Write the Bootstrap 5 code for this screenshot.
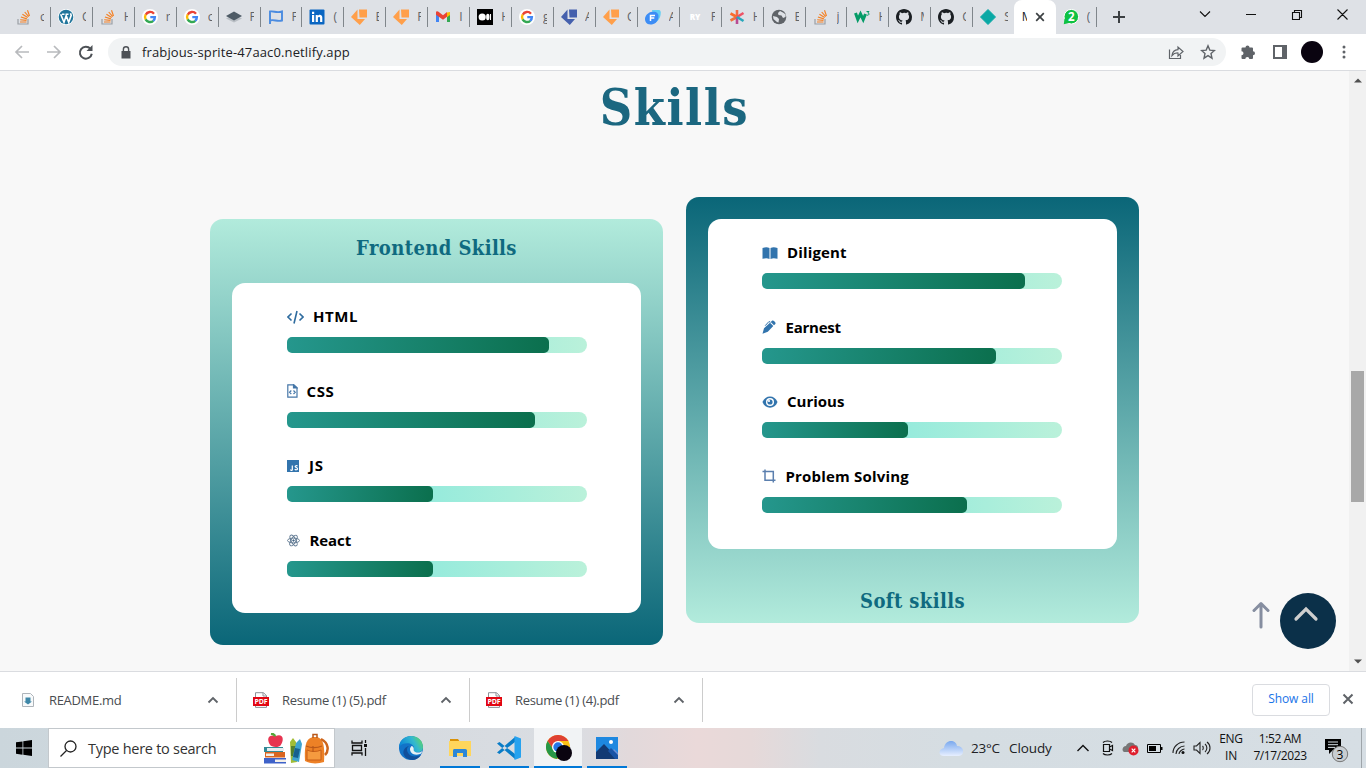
<!DOCTYPE html>
<html lang="en">
<head>
<meta charset="utf-8">
<title>Skills</title>
<link rel="stylesheet" href="https://cdn.jsdelivr.net/npm/bootstrap@5.3.0/dist/css/bootstrap.min.css">
<style>
body{width:1366px;height:768px;overflow:hidden;font-family:"Open Sans","Noto Sans",sans-serif;font-size:12px;line-height:1.2;color:#202124;background:#fff}
svg{display:block;flex:none}
.tabstrip{height:34px;background:#dee1e6;padding-left:9px}
.tab{width:41.93px;height:34px;padding-left:7px;flex:none;background:linear-gradient(#80868b,#80868b) right 7px/1px 20px no-repeat}
.tab.plain{background:none;width:40.6px}
.tab .ltr{width:4px;margin-left:8px;overflow:hidden;color:#5f6368;font-size:12px}
.tab-on{width:42px;height:34px;background:#fff;border-radius:8px 8px 0 0;flex:none;padding-left:8px}
.tab-on .ltr{width:5px;overflow:hidden;margin-right:8px}
.toolbar{height:37px;border-bottom:1px solid #dadce0}
.omni{width:1118px;height:28px;border-radius:14px;background:#f1f3f4;padding:0 10px 0 12px;font-size:13px}
.omni .url{margin:1px 0 0 11px;letter-spacing:.13px}
.pageview{height:600px;background:#f8f8f8}
.bar-v{width:17px;background:#f1f1f1;padding:7px 0}
.thumb{width:13px;height:131px;background:#a8a8a8;margin-top:288px}
.slab{font-family:"DejaVu Serif Condensed","DejaVu Serif",serif;font-stretch:condensed;font-weight:700;color:#0f6a80}
.ttl{font-size:50px;line-height:60px;margin:7px 0 0;letter-spacing:1.5px;color:#1b6780}
.cards{gap:23px;height:448px;margin-top:59px}
.skill-card{width:453px;height:426px;border-radius:13px;padding:0 22px}
.skill-card h2{font-size:20px;margin:0;line-height:24px;letter-spacing:.4px}
.front{background:linear-gradient(#b2ebdc,#0a6678);margin-top:22px}
.soft{background:linear-gradient(#0a6678,#b2ebdc);padding-top:22px}
.inner{height:330px;background:#fff;border-radius:13px;padding:23px 54px 0 55px}
.inner.r{padding-left:54px}
.skill{height:74.67px}
.skill .nm{height:21px;font-weight:700;font-size:15px;color:#000;margin-bottom:10px}
.skill .nm span{margin-top:-1px}
.track{width:300px;height:16px;border-radius:8px;background:linear-gradient(90deg,#76e5df,#98ebdc 50%,#baf1da)}
.fill{height:16px;border-radius:5px;background:linear-gradient(95deg,#25978d,#0b6f4d)}
.totop{position:absolute;left:1280px;top:522px;width:56px;height:56px;border-radius:50%;background:#0b3049}
.uparrow{position:absolute;left:1252px;top:530px}
.dl{height:57px;border-top:1px solid #dadce0}
.dl .item{height:44px;border-right:1px solid #ccc;font-size:13px;color:#4a4d51;width:233px;padding-left:16px}
.dl .item span{margin-top:1px;letter-spacing:-.32px}
.showall{width:78px;height:32px;border:1px solid #dadce0;border-radius:4px;color:#1a73e8;font-size:12px;margin-bottom:1px;letter-spacing:-.1px}
.task{height:40px;background:linear-gradient(90deg,#cbd6dc,#d4dadf 25%,#dadde2 42%,#e2d9db 46%,#ead9d9 51%,#e6d9d9 55%,#d9dce0 60%,#d5dde2 70%,#d6dee4)}
.search{width:287px;height:40px;border:1px solid #c3c8cc;background:#fff;font-size:14.5px;padding:0 5px 0 11px;color:#333}
.app{height:40px;border-bottom:2px solid #0078d7;flex:none;padding-top:2px}
.tray{font-size:12px;color:#111;text-align:center;line-height:17px}
</style>
</head>
<body class="d-flex flex-column">
<svg width="0" height="0" class="position-absolute">
<defs>
<symbol id="so" viewBox="0 0 16 16"><path d="M2 10v5h10v-5" fill="none" stroke="#9a9fa5" stroke-width="1.2"/><path d="M4 13h6.500M4.200 10.700l6.300.7M4.900 8l6 1.900M6.400 5.300l5.300 3.300M8.700 3l4 4.700M11.500 1.300l2 5.700" stroke="#f48024" stroke-width="1.150"/></symbol>
<symbol id="wp" viewBox="0 0 16 16"><circle cx="8" cy="8" r="8" fill="#fff"/><circle cx="8" cy="8" r="7.300" fill="#21759b"/><path d="M2.700 5.200l3.300 8 2.200-6.500 2.500 6.500 2.500-6.800-.7-2.200M4 5.200h2.500M7.500 5.200h3" fill="none" stroke="#fff" stroke-width="1.600"/></symbol>
<symbol id="gg" viewBox="0 0 16 16"><circle cx="8" cy="8" r="8" fill="#fff"/><g fill="none" stroke-width="2.400"><path d="M12 4.700A5 5 0 0 0 3.700 5.700" stroke="#ea4335"/><path d="M3.700 5.500a5 5 0 0 0 0 5" stroke="#fbbc05"/><path d="M3.600 10.400a5 5 0 0 0 7.700 1.400" stroke="#34a853"/><path d="M11.200 11.900A5 5 0 0 0 12.900 8.100H8.300" stroke="#4285f4"/></g></symbol>
<symbol id="layers" viewBox="0 0 16 16"><path d="M0 9.500l8-4 8 4-8 4z" fill="#b9bec4"/><path d="M0 7l8-4.500L16 7l-8 4.500z" fill="#4e5b66"/></symbol>
<symbol id="flag" viewBox="0 0 16 16"><path d="M2 15V2.500c4-1 6 2 12 0v9c-5 1.500-8-1.500-12 0" fill="none" stroke="#4a8be0" stroke-width="1.900"/></symbol>
<symbol id="li" viewBox="0 0 16 16"><rect x=".5" y=".5" width="15" height="15" rx="1" fill="#0a66c2"/><path d="M3 6h2.200v7H3zM3 2.800h2.200V5H3zM6.700 6h2.100v1c1-1.800 4.500-1.600 4.500 1.600V13h-2.200V9.300c0-2-2.200-1.700-2.200 0V13H6.700z" fill="#fff"/></symbol>
<symbol id="shard" viewBox="0 0 16 16"><path d="M6.500.5V10H14L8.800 16 0 8zM8 .5h8V8.500H8.500z"/></symbol>
<symbol id="gm" viewBox="0 0 16 16"><path d="M1 4v9h3V7z" fill="#4285f4"/><path d="M15 4v9h-3V7z" fill="#34a853"/><path d="M12 3.500l3-.5v3l-3 2.200z" fill="#fbbc04"/><path d="M1 3.500c0-1.500 1.600-1.600 2.500-.8L8 6.200l4-3.200v4.800l-4 3-7-5z" fill="#ea4335"/></symbol>
<symbol id="med" viewBox="0 0 16 16"><path d="M0 0h16v16H0z"/><circle cx="5.200" cy="8" r="3.600" fill="#fff"/><ellipse cx="10.800" cy="8" rx="1.700" ry="3.300" fill="#fff"/><path d="M13.500 5v6" stroke="#fff" stroke-width="1.100"/></symbol>
<symbol id="ff" viewBox="0 0 16 16"><path d="M7 1h6c3 0 3 2 2.500 5S13 13 9 14z" fill="#62cff4"/><path d="M6 3c5-1 8 1 7.500 5-.5 5-4 7.500-8 7.500C1 15.500 0 12 0 10c0-3 3-6.500 6-7z" fill="#3d8df5"/><path d="M5.500 12V6.500H10M6 9h3.300" stroke="#fff" stroke-width="1.500" fill="none"/></symbol>
<symbol id="ast" viewBox="0 0 16 16"><g stroke-width="2.600" fill="none"><path d="M8 8V1" stroke="#f36b45"/><path d="M8 8L1.500 4.500" stroke="#fa6b2c"/><path d="M8 8l6.500-4" stroke="#ee5366"/><path d="M8 8l-6.500 3.500" stroke="#ee743b"/><path d="M8 8v7" stroke="#b94b93"/><path d="M8 8l6.500 4" stroke="#28a7bb"/></g></symbol>
<symbol id="glb" viewBox="0 0 16 16"><circle cx="8" cy="8" r="7.300" fill="#5f6368"/><path d="M9 2l-2 2 .5 2 3 .5 1.500 2.500 2.500-1 .2-2.500L12 3.500zM2 7l4 1 2 2-.5 3.500L6 13 2.500 10z" fill="#dee1e6"/></symbol>
<symbol id="w3" viewBox="0 0 16 16"><path d="M1.500 4l2.300 6.500L6.500 5l2.700 5.500L11.500 5" fill="none" stroke="#049b67" stroke-width="3"/><path d="M12.500 2.500h2.500L13.800 4c1.800 0 1.800 2.500-1 2.200" fill="none" stroke="#049b67" stroke-width="1"/></symbol>
<symbol id="gh" viewBox="0 0 16 16"><path d="M8 0C3.580 0 0 3.580 0 8c0 3.540 2.290 6.530 5.470 7.590.4.070.55-.17.55-.38v-1.490c-2.230.49-2.690-.94-2.690-.94-.36-.92-.89-1.170-.89-1.170-.72-.5.060-.49.060-.49.800.06 1.220.82 1.220.82.720 1.220 1.880.87 2.330.66.070-.52.280-.87.510-1.070-1.780-.2-3.640-.89-3.640-3.950 0-.87.310-1.590.820-2.150-.08-.2-.36-1.010.080-2.120 0 0 .67-.21 2.200.82A7.700 7.700 0 0 1 8 3.860c.68 0 1.360.09 2 .27 1.530-1.040 2.200-.82 2.200-.82.440 1.110.160 1.920.080 2.120.51.560.820 1.280.820 2.150 0 3.070-1.870 3.750-3.650 3.950.29.25.540.73.540 1.480v2.200c0 .21.150.46.550.38A8 8 0 0 0 16 8c0-4.420-3.580-8-8-8z" fill="#1b1f23"/></symbol>
<symbol id="dia" viewBox="0 0 16 16"><path d="M8 .5L15.500 8 8 15.500.5 8z" fill="#0aa8a5" stroke="#0aa8a5" stroke-linejoin="round"/></symbol>
<symbol id="pdf" viewBox="0 0 16 16"><path d="M2.500 5V.7h8l3 3V5M10 .7V4h3.500M2.500 14v1.400h11V14" fill="none" stroke="#8d9298"/><path d="M0 5h16v9H0z" fill="#e20613"/><text x="8" y="12" text-anchor="middle" font-size="7" font-weight="700" fill="#fff" font-family="Open Sans,sans-serif" textLength="13">PDF</text></symbol>
<symbol id="up" viewBox="0 0 12 12"><path d="M1.500 8.500L6 4l4.500 4.500" fill="none" stroke="#5f6368" stroke-width="1.800"/></symbol>
</defs></svg>

<header class="tabstrip d-flex align-items-center">
<div class="tab d-flex align-items-center"><svg width="16" height="16"><use href="#so"/></svg><span class="ltr">c</span></div>
<div class="tab d-flex align-items-center"><svg width="16" height="16"><use href="#wp"/></svg><span class="ltr">C</span></div>
<div class="tab d-flex align-items-center"><svg width="16" height="16"><use href="#so"/></svg><span class="ltr">H</span></div>
<div class="tab d-flex align-items-center"><svg width="16" height="16"><use href="#gg"/></svg><span class="ltr">r</span></div>
<div class="tab d-flex align-items-center"><svg width="16" height="16"><use href="#gg"/></svg><span class="ltr">c</span></div>
<div class="tab d-flex align-items-center"><svg width="16" height="16"><use href="#layers"/></svg><span class="ltr">F</span></div>
<div class="tab d-flex align-items-center"><svg width="16" height="16"><use href="#flag"/></svg><span class="ltr">F</span></div>
<div class="tab d-flex align-items-center"><svg width="16" height="16"><use href="#li"/></svg><span class="ltr">(</span></div>
<div class="tab d-flex align-items-center"><svg width="16" height="16" fill="#ff9f4a"><use href="#shard"/></svg><span class="ltr">E</span></div>
<div class="tab d-flex align-items-center"><svg width="16" height="16" fill="#ff9f4a"><use href="#shard"/></svg><span class="ltr">F</span></div>
<div class="tab d-flex align-items-center"><svg width="16" height="16"><use href="#gm"/></svg><span class="ltr">I</span></div>
<div class="tab d-flex align-items-center"><svg width="16" height="16"><use href="#med"/></svg><span class="ltr">H</span></div>
<div class="tab d-flex align-items-center"><svg width="16" height="16"><use href="#gg"/></svg><span class="ltr">g</span></div>
<div class="tab d-flex align-items-center"><svg width="16" height="16" fill="#4560ad"><use href="#shard"/></svg><span class="ltr">A</span></div>
<div class="tab d-flex align-items-center"><svg width="16" height="16" fill="#ff9f4a"><use href="#shard"/></svg><span class="ltr">C</span></div>
<div class="tab d-flex align-items-center"><svg width="16" height="16"><use href="#ff"/></svg><span class="ltr">A</span></div>
<div class="tab d-flex align-items-center"><svg width="16" height="16" viewBox="0 0 16 16"><text x="8" y="11" text-anchor="middle" font-size="8" font-weight="800" fill="#fff">RY</text></svg><span class="ltr">F</span></div>
<div class="tab d-flex align-items-center"><svg width="16" height="16"><use href="#ast"/></svg><span class="ltr">H</span></div>
<div class="tab d-flex align-items-center"><svg width="16" height="16"><use href="#glb"/></svg><span class="ltr">E</span></div>
<div class="tab d-flex align-items-center"><svg width="16" height="16"><use href="#so"/></svg><span class="ltr">j</span></div>
<div class="tab d-flex align-items-center"><svg width="16" height="16"><use href="#w3"/></svg><span class="ltr">H</span></div>
<div class="tab d-flex align-items-center"><svg width="16" height="16"><use href="#gh"/></svg><span class="ltr">M</span></div>
<div class="tab d-flex align-items-center"><svg width="16" height="16"><use href="#gh"/></svg><span class="ltr">C</span></div>
<div class="tab plain d-flex align-items-center"><svg width="16" height="16"><use href="#dia"/></svg><span class="ltr">S</span></div>
<div class="tab-on d-flex align-items-center"><span class="ltr">M</span><svg width="10" height="10" viewBox="0 0 10 10"><path d="M1.200 1.200l7.600 7.600M8.800 1.200L1.200 8.800" stroke="#3c4043" stroke-width="1.700"/></svg></div>
<div class="tab d-flex align-items-center" style="width:41px"><svg width="16" height="16" viewBox="0 0 16 16"><circle cx="8.300" cy="7.700" r="7.300" fill="#0ec143" stroke="#fff"/><path d="M1.500 9.500L.8 15.200l6-1.500z" fill="#0ec143"/><text x="8.300" y="12" font-size="11.500" font-weight="700" fill="#fff" text-anchor="middle" font-family="Open Sans,sans-serif">2</text></svg><span class="ltr">(</span></div>
<svg width="12" height="12" viewBox="0 0 12 12" style="margin-left:16px"><path d="M6 0v12M0 6h12" stroke="#3c4043" stroke-width="2"/></svg>
<svg width="160" height="14" viewBox="0 0 160 14" style="margin:-6px 0 0 74px" fill="none" stroke="#111"><path d="M1 4.500L6 9.500l5-5M47 7.500h10M93.500 5.500h7v7h-7zM95.500 5.500v-2h7v7h-2M138.500 2.500l10 10M148.500 2.500l-10 10" stroke-width="1.100"/></svg>
</header>

<nav class="toolbar d-flex align-items-center">
<svg width="80" height="18" viewBox="0 0 80 18" style="margin-left:14px" fill="none"><path d="M15 9H2M8 3L2 9l6 6" stroke="#b8babd" stroke-width="1.700"/><path d="M33 9h13M40 3l6 6-6 6" stroke="#b8babd" stroke-width="1.700"/><path d="M76.500 5.800a6 6 0 1 0 1.300 5" stroke="#4d5156" stroke-width="2"/><path d="M78.500 2v6h-6z" fill="#4d5156"/></svg>
<div class="omni d-flex align-items-center" style="margin-left:14px"><svg width="10" height="13" viewBox="0 0 10 13" style="margin-left:1px"><path d="M.5 5h9v7.500h-9z" fill="#4d5156"/><path d="M2.400 5.500V3.300a2.600 2.600 0 0 1 5.200 0v2.200" fill="none" stroke="#4d5156" stroke-width="1.400"/></svg><span class="url">frabjous-sprite-47aac0.netlify.app</span>
<svg class="ms-auto" width="16" height="16" viewBox="0 0 16 16" fill="none" stroke="#5f6368"><path d="M1.500 5.500v9h11V11M4 11.500c.5-4 2.500-5.500 6-5.800V3l5 4.500-5 4.500V9c-2.500-.2-4.500.7-6 2.500z" stroke-width="1.200"/></svg>
<svg width="16" height="16" viewBox="0 0 16 16" fill="none" style="margin-left:16px"><path d="M8 1.800l1.800 4.300 4.700.4L11 9.600l1 4.600-4-2.500-4 2.500 1-4.600-3.500-3.100 4.700-.4z" stroke="#5f6368" stroke-width="1.400"/></svg></div>
<svg width="16" height="16" viewBox="0 0 16 16" fill="#5f6368" style="margin-left:14px"><path d="M1.500 4.500q0-1 1-1H5.500a2 2 0 1 1 4 0H12q1 0 1 1V7.200a2 2 0 1 1 0 4V14q0 1-1 1H9.300a2 2 0 0 0-4 0H2.500q-1 0-1-1V11.200a2 2 0 0 0 0-4z"/></svg>
<svg width="14" height="14" viewBox="0 0 14 14" style="margin-left:17px"><path d="M1 1h12v12H1z" fill="none" stroke="#5f6368" stroke-width="2"/><path d="M9 1h4v12H9z" fill="#5f6368"/></svg>
<span class="rounded-circle" style="width:22px;height:22px;background:#0a0410;margin-left:14px"></span>
<svg width="4" height="14" viewBox="0 0 4 14" fill="#5f6368" style="margin-left:19px"><circle cx="2" cy="2" r="1.500"/><circle cx="2" cy="7" r="1.500"/><circle cx="2" cy="12" r="1.500"/></svg>
</nav>

<main class="pageview d-flex position-relative">
<section class="flex-grow-1">
<h1 class="slab ttl text-center">Skills</h1>
<div class="cards d-flex justify-content-center">
<article class="skill-card front">
<h2 class="slab text-center" style="padding-top:17px;height:64px">Frontend Skills</h2>
<div class="inner">
<div class="skill"><div class="nm d-flex align-items-center"><svg width="17" height="14" viewBox="0 0 17 14" fill="none" stroke="#2f6c9f" stroke-width="1.600"><path d="M4.500 3.500L1 7l3.500 3.500M12.500 3.500L16 7l-3.500 3.500M10 1L7 13.500"/></svg><span style="margin-left:9px;letter-spacing:.6px">HTML</span></div><div class="track"><div class="fill" style="width:87.4%"></div></div></div>
<div class="skill"><div class="nm d-flex align-items-center"><svg width="11" height="14" viewBox="0 0 11 14" fill="none" stroke="#4677a8" stroke-width="1.200"><path d="M.8.800h6l3.200 3v9.400H.8zM4.300 6.500L2.600 8.300 4.300 10M6.500 6.500l1.700 1.800L6.500 10"/><path d="M6.500.800V4H10z" fill="#2f6c9f"/></svg><span style="margin-left:8.5px;letter-spacing:.6px">CSS</span></div><div class="track"><div class="fill" style="width:82.600%"></div></div></div>
<div class="skill"><div class="nm d-flex align-items-center"><svg width="12" height="12" viewBox="0 0 12 12"><path d="M0 0h12v12H0z" fill="#3274ad"/><path d="M5.300 5.500v4c0 1.300-1.800 1-1.800.1M10.500 6.200c-.8-.9-2.500-.5-2.300.5.200 1.100 2.300.6 2.300 2 0 1.300-2 1.400-2.700.4" fill="none" stroke="#fff" stroke-width="1.200"/></svg><span style="margin-left:10px;letter-spacing:.8px">JS</span></div><div class="track"><div class="fill" style="width:48.700%"></div></div></div>
<div class="skill"><div class="nm d-flex align-items-center"><svg width="13" height="13" viewBox="0 0 13 13" fill="none" stroke="#5f7891" stroke-width=".9"><ellipse cx="6.500" cy="6.500" rx="6" ry="2.400"/><ellipse cx="6.500" cy="6.500" rx="6" ry="2.400" transform="rotate(60 6.500 6.500)"/><ellipse cx="6.500" cy="6.500" rx="6" ry="2.400" transform="rotate(120 6.500 6.500)"/><circle cx="6.500" cy="6.500" r=".8" fill="#24517c"/></svg><span style="margin-left:9.5px;letter-spacing:-.1px">React</span></div><div class="track"><div class="fill" style="width:48.700%"></div></div></div>
</div>
</article>
<article class="skill-card soft">
<div class="inner r">
<div class="skill"><div class="nm d-flex align-items-center"><svg width="16" height="12" viewBox="0 0 16 12" fill="#3274ad"><path d="M.5 1c3-1 5-.9 7 0v11c-2-1-4-1-7-.2zM8.500 1c2-.9 4-1 7 0v10.800c-3-.8-5-.8-7 .2z"/></svg><span style="margin-left:9px;letter-spacing:.15px">Diligent</span></div><div class="track"><div class="fill" style="width:87.600%"></div></div></div>
<div class="skill"><div class="nm d-flex align-items-center"><svg width="14" height="14" viewBox="0 0 14 14" fill="#3274ad"><path d="M10 .8c1-1.200 4.500 1.500 3.300 3.200L12 5.200 8.700 2zM8 2.700l3.300 3.300-5.500 5.800L.5 13.700 2 8.300z"/><path d="M3.200 5.700L7 1.500l1.500.8" fill="none" stroke="#3274ad"/></svg><span style="margin-left:9.5px;letter-spacing:-.25px">Earnest</span></div><div class="track"><div class="fill" style="width:78%"></div></div></div>
<div class="skill"><div class="nm d-flex align-items-center"><svg width="16" height="14" viewBox="0 0 16 14"><path d="M.5 7C3-.5 13-.5 15.500 7 13 14.500 3 14.500.5 7z" fill="#3274ad"/><circle cx="8" cy="7" r="4" fill="#fff"/><circle cx="8" cy="7" r="2.600" fill="#3274ad"/><circle cx="7" cy="6" r="1.100" fill="#fff"/></svg><span style="margin-left:9px">Curious</span></div><div class="track"><div class="fill" style="width:48.700%"></div></div></div>
<div class="skill"><div class="nm d-flex align-items-center"><svg width="14" height="14" viewBox="0 0 14 14" fill="none" stroke="#5b7fae" stroke-width="1.500"><path d="M.5 2.500h10.800v11M3 .5v10.800h10.500"/></svg><span style="margin-left:9.5px;letter-spacing:.18px">Problem Solving</span></div><div class="track"><div class="fill" style="width:68.300%"></div></div></div>
</div>
<h2 class="slab text-center" style="margin-top:40px">Soft skills</h2>
</article>
</div>
</section>
<aside class="bar-v d-flex flex-column align-items-center">
<svg width="8" height="5" viewBox="0 0 8 5"><path d="M0 4.500L4 .5l4 4z" fill="#505050"/></svg>
<div class="thumb"></div>
<svg class="mt-auto" width="8" height="5" viewBox="0 0 8 5"><path d="M0 .5l4 4 4-4z" fill="#505050"/></svg>
</aside>
<svg class="uparrow" width="18" height="28" viewBox="0 0 18 28" fill="none" stroke="#868ea0" stroke-width="3" stroke-linecap="round" stroke-linejoin="round"><path d="M9 26V3M2 9.500L9 2.500l7 7"/></svg>
<div class="totop"><svg width="56" height="56" viewBox="0 0 56 56" fill="none" stroke="#cfcfcf" stroke-width="3.200" stroke-linecap="round"><path d="M16 26L26 16l10 10"/></svg></div>
</main>

<section class="dl d-flex align-items-center">
<div class="item d-flex align-items-center" style="width:237px;padding-left:22px"><svg width="12" height="14" viewBox="0 0 12 14"><path d="M.5.500h8l3 3v10H.5z" fill="#f8fafb" stroke="#aeb4ba"/><path d="M3.500 4.500h5v4H10l-4 3-4-3h1.500z" fill="#3e87a8"/></svg><span style="margin-left:15px">README.md</span><svg class="ms-auto" width="12" height="12" style="margin-right:17px"><use href="#up"/></svg></div>
<div class="item d-flex align-items-center"><svg width="16" height="16" style="margin-top:-1px"><use href="#pdf"/></svg><span style="margin-left:13px">Resume (1) (5).pdf</span><svg class="ms-auto" width="12" height="12" style="margin-right:17px"><use href="#up"/></svg></div>
<div class="item d-flex align-items-center"><svg width="16" height="16" style="margin-top:-1px"><use href="#pdf"/></svg><span style="margin-left:13px">Resume (1) (4).pdf</span><svg class="ms-auto" width="12" height="12" style="margin-right:17px"><use href="#up"/></svg></div>
<div class="showall ms-auto d-flex align-items-center justify-content-center">Show all</div>
<svg width="12" height="12" viewBox="0 0 12 12" style="margin:0 12px 2px"><path d="M1.500 1.500l9 9M10.500 1.500l-9 9" stroke="#5f6368" stroke-width="2"/></svg>
</section>

<footer class="task d-flex align-items-center">
<svg width="16" height="16" viewBox="0 0 16 16" style="margin:0 0 0 16px"><path d="M0 2.300L6.500 1.400v6.200H0zM7.300 1.300L16 0v7.600H7.300zM0 8.400h6.500v6.300L0 13.800zM7.300 8.400H16V16l-8.700-1.200z"/></svg>
<div class="search d-flex align-items-center" style="margin-left:16px"><svg width="17" height="17" viewBox="0 0 17 17" fill="none" stroke="#222" stroke-width="1.300"><circle cx="10.500" cy="6.500" r="5.500"/><path d="M6.500 10.500L.5 16.500"/></svg><span style="margin:2px 0 0 11px;letter-spacing:-.27px">Type here to search</span>
<svg class="ms-auto" width="66" height="32" viewBox="0 0 66 32" style="margin-top:2px"><path d="M1 14h19v5H1z" fill="#328a96"/><path d="M4 15h17v3H4z" fill="#e9edf0"/><path d="M2 19h20v5.500H2z" fill="#d96520"/><path d="M4 25h19v5.500H1V25z" fill="#3e62c9"/><path d="M3 20.500h8v2.500H3zM12 26.500h11v2.500H12z" fill="#f3efe8"/><path d="M12.500 3c8-3 9 4 5 9.500-1.500 2-9 2.500-11-1.500C3.500 5 6 1 12.500 3z" fill="#e73450"/><path d="M12 3.500C12 2 11 1 8 .5" stroke="#53a637" stroke-width="2.300" fill="none"/><path d="M27 9l3-4 3 4 1 20-6 1z" fill="#a2bd35"/><path d="M28 13h5v10h-5z" fill="#547f2d"/><path d="M33 10l4-4 2 5-3 18-7-2z" fill="#3fa3cf"/><path d="M32 15l5 1-2 9-5-1z" fill="#17608f"/><path d="M42 28c-1-18 2-24 10-24s10 7 9 25c-6 2-14 2-19-1z" fill="#ed8126"/><path d="M58 6c8 4 8 12 4 16" fill="none" stroke="#cd651c" stroke-width="2.500"/><path d="M50 5V1.500h4V5" fill="none" stroke="#b95819" stroke-width="1.500"/><path d="M44 17c4 2 10 2 14 0v10H44z" fill="#f59a3f" stroke="#c85f18"/><path d="M43 13c5 2 11 2 16 0M50 13v6" stroke="#b95819" fill="none" stroke-width="1.200"/></svg></div>
<svg width="17" height="16" viewBox="0 0 17 16" fill="none" stroke="#111" stroke-width="1.300" style="margin:0 0 0 16px"><path d="M1 .5V3h10V.5M1 15.500V13h10v2.500M1.500 5.500h9v5h-9zM14.500 0v3M14.500 8v8"/><path d="M13 4h3v3h-3z" fill="#111" stroke="none"/></svg>
<svg width="24" height="24" viewBox="0 0 24 24" style="margin-left:31px"><defs><linearGradient id="eg" x1="0" x2="1" y1="0.4" y2="0"><stop stop-color="#0c87d6"/><stop offset=".55" stop-color="#33b8cf"/><stop offset="1" stop-color="#6bdf45"/></linearGradient></defs><circle cx="12" cy="12" r="12" fill="#1273c8"/><path d="M0 11C1-3 23-4 24 11c0 5-5 6-9 5-2-1 0-2 0-4 0-5-10-7-15-1z" fill="url(#eg)"/><path d="M8 14c1 6 7 8 14 5-5 8-15 5-17 0-2-4 1-8 5-9-2 1-2 3-2 4z" fill="#114f9b"/><path d="M11 13c0-1 1-3 2-3 3 2 1 4 2 5 2 2 6 2 8 0 0 2-1 3-2 3-6 2-10-1-10-5z" fill="#e7f0f4"/></svg>
<div class="app d-flex align-items-center justify-content-center" style="width:40px;margin-left:17px"><svg width="22" height="20" viewBox="0 0 22 20"><path d="M1 1h8l2 3h-10z" fill="#d99208"/><path d="M0 3h22v15H0z" fill="#ffd65c"/><path d="M4 19v-6c0-2 1-2 2-2h10c2 0 2 1 2 2v6h-4v-4H8v4z" fill="#2c87d8"/></svg></div>
<div class="app d-flex align-items-center justify-content-center" style="width:40px;margin-left:9px"><svg width="24" height="24" viewBox="0 0 24 24"><path d="M0 7.500l2.500-1.500L18 18v5zM0 16.500L2.500 18 18 6V1z" fill="#087cc7"/><path d="M17.500 0L24 2.500v19L17.500 24z" fill="#26a2ef"/></svg></div>
<div class="app d-flex align-items-center justify-content-center" style="width:48px;margin-left:5px;background:#f1f3f5;padding-left:2px"><svg width="26" height="26" viewBox="0 0 26 26"><circle cx="12" cy="12" r="12" fill="#fbc116"/><path d="M1.600 6A12 12 0 0 1 22.400 6H12L7 14z" fill="#df4032"/><path d="M1.600 6A12 12 0 0 0 11 24l5-9-9-1z" fill="#279747"/><circle cx="12" cy="12" r="6" fill="#fff"/><circle cx="12" cy="12" r="4.700" fill="#2676e5"/><circle cx="18" cy="18" r="8" fill="#0a0410"/></svg></div>
<div class="app d-flex align-items-center justify-content-center" style="width:40px;margin-left:5px"><svg width="22" height="22" viewBox="0 0 22 22"><path d="M0 0h22v22H0z" fill="#1e88e0"/><path d="M12 22l6-10 4 4v6z" fill="#6e8fd8"/><path d="M0 15L8 7l14 15H0z" fill="#123a74"/><path d="M12 14l3-3 7 7v4h-3z" fill="#1953a5"/><circle cx="15" cy="5" r="2" fill="#fff"/></svg></div>
<svg class="ms-auto" width="24" height="17" viewBox="0 0 24 17"><defs><linearGradient id="cl" x2="0" y2="1"><stop stop-color="#79a8ee"/><stop offset="1" stop-color="#e7efff"/></linearGradient></defs><path d="M5 16C-1 16-1 9 5 8 6-1 17-1 18 6c8 0 8 10 1 10z" fill="url(#cl)"/></svg>
<span style="width:38px;margin-left:8px;font-size:13.500px;letter-spacing:-.2px">23°C</span><span style="width:68px;font-size:13.500px;letter-spacing:-.1px">Cloudy</span>
<svg width="12" height="12" viewBox="0 0 12 12"><path d="M0.500 9L6 3.500 11.500 9" fill="none" stroke="#111" stroke-width="1.400"/></svg>
<svg width="12" height="16" viewBox="0 0 12 16" fill="none" stroke="#111" style="margin-left:13px"><path d="M1.500 4.500h6v7h-6zM7.500 7l3-1.500v5L7.500 9M1 2.500c2-2 7-2 9 0M1 13.500c2 2 7 2 9 0" stroke-width="1.200"/></svg>
<svg width="17" height="15" viewBox="0 0 17 15" style="margin-left:8px"><path d="M2 11C-1 9 1 5 4 5c1-4 7-5 9-1 2 0 3 1 3 3l-5 4z" fill="#777"/><circle cx="11.500" cy="9.500" r="5" fill="#df1f2d"/><path d="M9.700 7.700l3.600 3.600M13.300 7.700l-3.600 3.600" stroke="#fff" stroke-width="1.200"/></svg>
<svg width="16" height="9" viewBox="0 0 16 9" style="margin-left:8px"><path d="M.5.500h13v8H.5z" fill="none" stroke="#000"/><path d="M2 2h7v5H2zM14 3h1.500v3H14z"/></svg>
<svg width="14" height="14" viewBox="0 0 14 14" style="margin-left:9px" fill="none" stroke="#222"><path d="M1 12C1 6 6 1 12.500 1M4 13c0-4 4-8 8.500-8M7 13c0-2 3-5 5.500-5" stroke-width="1.100"/><circle cx="11" cy="11.500" r="1.500" fill="#111" stroke="none"/></svg>
<svg width="18" height="14" viewBox="0 0 18 14" style="margin-left:7px" fill="none" stroke="#222"><path d="M1 5h2.500L7 1.500v11L3.500 9H1zM9.500 5c1 1 1 3 0 4M12 3c2.500 2 2.500 6 0 8M14 1c4 3 4 9 0 12" stroke-width="1.100"/></svg>
<div class="tray" style="width:40px;letter-spacing:-.3px;padding-bottom:2px">ENG<br>IN</div>
<div class="tray" style="width:58px;letter-spacing:-.4px;padding-bottom:2px;white-space:nowrap">1:52 AM<br>7/17/2023</div>
<svg width="26" height="26" viewBox="0 0 26 26" style="margin:5px 11px 0 15px"><path d="M1 1h16v11H9l-4 4v-4H1z"/><path d="M4 4h10M4 6.700h10M4 9.400h7" stroke="#d6dee4"/><circle cx="16" cy="16" r="7.700" fill="#c8cdd1" stroke="#777"/><text x="16" y="20.500" text-anchor="middle" font-size="12" font-family="Open Sans,sans-serif">3</text></svg>
<span style="width:5px;height:40px;border-left:1px solid #9ea5aa"></span>
</footer>
<script src="https://cdn.jsdelivr.net/npm/bootstrap@5.3.0/dist/js/bootstrap.bundle.min.js"></script>
</body>
</html>
